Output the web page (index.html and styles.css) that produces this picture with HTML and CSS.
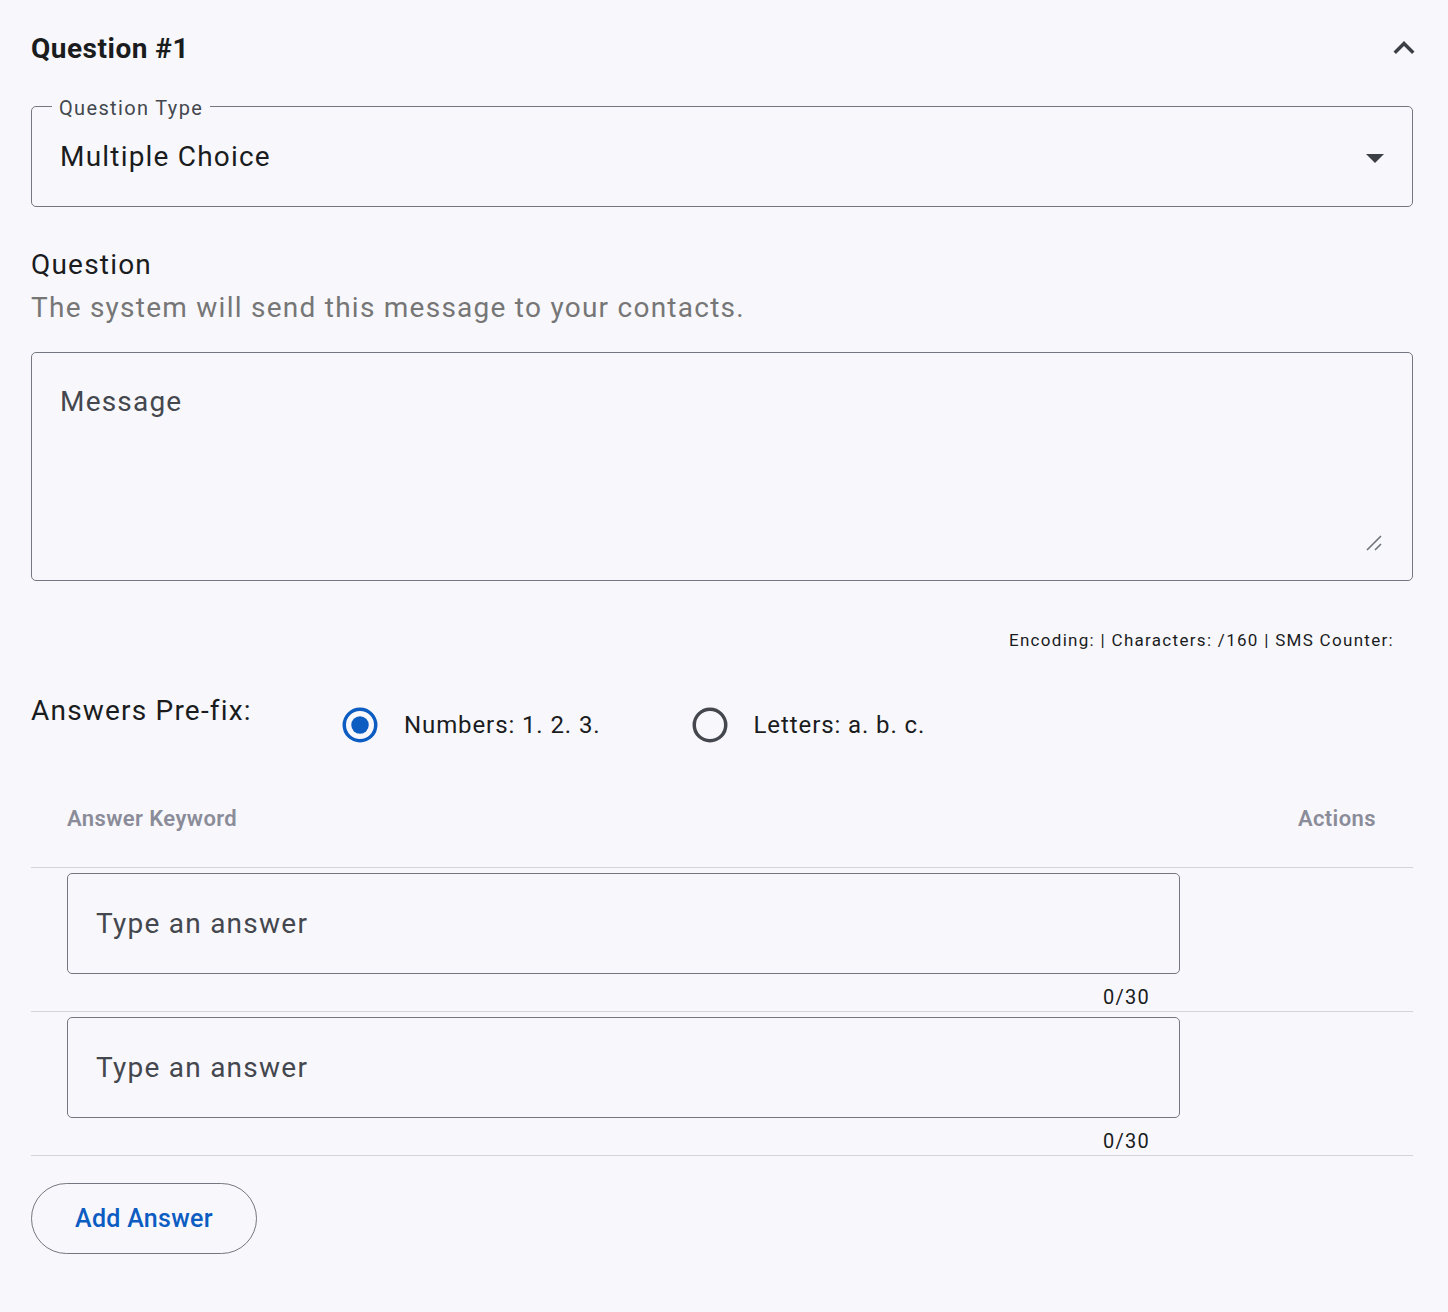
FILE: index.html
```html
<!DOCTYPE html>
<html>
<head>
    <meta name="viewport" content="width=device-width, initial-scale=1.0">
    <link rel="stylesheet" href="styles.css">
</head>
<body>
    <div class="question">

        <div class="question-head">
            <h2>Question #1</h2>
            <button class="collapse" aria-label="collapse">
                <svg width="42" height="42" viewBox="0 0 24 24"><path d="M12 8l-6 6 1.41 1.41L12 10.83l4.59 4.58L18 14z" fill="#3c3f45"/></svg>
            </button>
        </div>

        <div class="outlined select">
            <span class="float-label">Question Type</span>
            <span class="select-value">Multiple Choice</span>
            <svg class="drop" width="18" height="9" viewBox="0 0 18 9"><path d="M0 0h18L9 9z" fill="#3c3f45"/></svg>
        </div>

        <div class="question-title">Question</div>
        <div class="question-hint">The system will send this message to your contacts.</div>

        <div class="outlined message">
            <textarea placeholder="Message"></textarea>
            <!-- resize grip -->
            <svg class="grip" width="16" height="16" viewBox="0 0 16 16"><path d="M1 15L15 1M9 15l6-6" stroke="#6f7279" stroke-width="1.6" fill="none"/></svg>
        </div>

        <div class="counter-line">Encoding: | Characters: /160 | SMS Counter:</div>

        <div class="prefix-row">
            <div class="prefix-label">Answers Pre-fix:</div>
            <div class="radios">
                <label class="radio">
                    <svg width="42" height="42" viewBox="0 0 24 24"><circle cx="12" cy="12" r="9" fill="none" stroke="#0c5cc2" stroke-width="2"/><circle cx="12" cy="12" r="5" fill="#0c5cc2"/></svg>
                    <span>Numbers: 1. 2. 3.</span>
                </label>
                <label class="radio">
                    <svg width="42" height="42" viewBox="0 0 24 24"><circle cx="12" cy="12" r="9" fill="none" stroke="#44474e" stroke-width="2"/></svg>
                    <span>Letters: a. b. c.</span>
                </label>
            </div>
        </div>

        <div class="answers">
            <div class="answers-head">
                <span>Answer Keyword</span>
                <span>Actions</span>
            </div>
            <div class="answer-row">
                <div class="answer-cell">
                    <div class="outlined answer-input">
                        <input type="text" placeholder="Type an answer">
                    </div>
                    <div class="char-count">0/30</div>
                </div>
            </div>
            <div class="answer-row">
                <div class="answer-cell">
                    <div class="outlined answer-input">
                        <input type="text" placeholder="Type an answer">
                    </div>
                    <div class="char-count">0/30</div>
                </div>
            </div>
        </div>

        <button class="add-answer">Add Answer</button>
    </div>
</body>
</html>
```

FILE: styles.css
```css
body {
    margin: 0;
    background-color: #f8f8fc;
    font-family: Roboto, "Liberation Sans", sans-serif;
    color: #1a1c1e;
}

.question {
    padding: 0 35px 40px 31px;
}

.question-head {
    display: flex;
    align-items: center;
    justify-content: space-between;
    height: 96px;
    margin-bottom: 10px;
}

.question-head h2 {
    margin: 0;
    font-size: 28px;
    font-weight: 700;
    letter-spacing: 0.5px;
}

.collapse {
    border: none;
    background: none;
    padding: 0;
    margin-right: -12px;
    display: flex;
    cursor: pointer;
}

.outlined {
    position: relative;
    border: 1px solid #74777f;
    border-radius: 5px;
    box-sizing: border-box;
}

.select {
    height: 101px;
    display: flex;
    align-items: center;
    justify-content: space-between;
    padding: 0 28px;
}

.select .drop {
    margin-top: 3px;
}

.float-label {
    position: absolute;
    top: -11px;
    left: 20px;
    padding: 0 7px;
    background-color: #f8f8fc;
    font-size: 20px;
    line-height: 24px;
    letter-spacing: 1.35px;
    color: #44474e;
}

.select-value {
    font-size: 28px;
    letter-spacing: 1.2px;
}

.question-title {
    margin-top: 36px;
    font-size: 28px;
    line-height: 43px;
    letter-spacing: 1.2px;
}

.question-hint {
    font-size: 28px;
    line-height: 43px;
    color: #767676;
    letter-spacing: 1.25px;
}

.message {
    margin-top: 23px;
    padding: 29px 28px 28px;
    height: 229px;
}

.message textarea {
    display: block;
    width: 100%;
    height: 170px;
    border: none;
    outline: none;
    background: transparent;
    padding: 0;
    resize: none;
    font-family: Roboto, "Liberation Sans", sans-serif;
    font-size: 28px;
    line-height: 40px;
    letter-spacing: 1.2px;
    color: #1a1c1e;
}

.grip {
    position: absolute;
    right: 30px;
    bottom: 29px;
}

.message textarea::placeholder,
.answer-input input::placeholder {
    color: #44474e;
    opacity: 1;
}

.counter-line {
    margin-top: 47px;
    padding-right: 19px;
    text-align: right;
    font-size: 17px;
    line-height: 24px;
    letter-spacing: 1.3px;
}

.prefix-row {
    display: flex;
    align-items: flex-start;
    margin-top: 37px;
}

.prefix-label {
    width: 308px;
    font-size: 28px;
    line-height: 43px;
    letter-spacing: 1.2px;
}

.radios {
    display: flex;
    gap: 88px;
    padding-top: 14px;
}

.radio {
    display: flex;
    align-items: center;
    gap: 23px;
    height: 43px;
    font-size: 24px;
    letter-spacing: 0.9px;
    cursor: pointer;
}

.radio svg {
    display: block;
}

.answers {
    margin-top: 24px;
}

.answers-head {
    display: flex;
    justify-content: space-between;
    padding: 34px 37px 33px 36px;
    border-bottom: 1px solid #d3d3da;
    font-size: 22px;
    line-height: 30px;
    font-weight: 600;
    color: #8b8c99;
    letter-spacing: 0.4px;
}

.answer-row {
    padding: 5px 0 1px 36px;
    border-bottom: 1px solid #d3d3da;
}

.answer-cell {
    width: 1113px;
}

.answer-input {
    height: 101px;
    display: flex;
    align-items: center;
    padding: 0 28px;
}

.answer-input input {
    width: 100%;
    border: none;
    outline: none;
    background: transparent;
    padding: 0;
    font-family: Roboto, "Liberation Sans", sans-serif;
    font-size: 28px;
    letter-spacing: 1.25px;
    color: #1a1c1e;
}

.char-count {
    text-align: right;
    padding-right: 30px;
    margin-top: 10px;
    font-size: 20px;
    line-height: 26px;
    letter-spacing: 1.25px;
}

.add-answer {
    margin-top: 27px;
    width: 226px;
    height: 71px;
    border: 1px solid #74777f;
    border-radius: 36px;
    background: transparent;
    font-family: Roboto, "Liberation Sans", sans-serif;
    font-size: 25px;
    font-weight: 500;
    letter-spacing: 0.3px;
    color: #0c5cc2;
    cursor: pointer;
}
```
